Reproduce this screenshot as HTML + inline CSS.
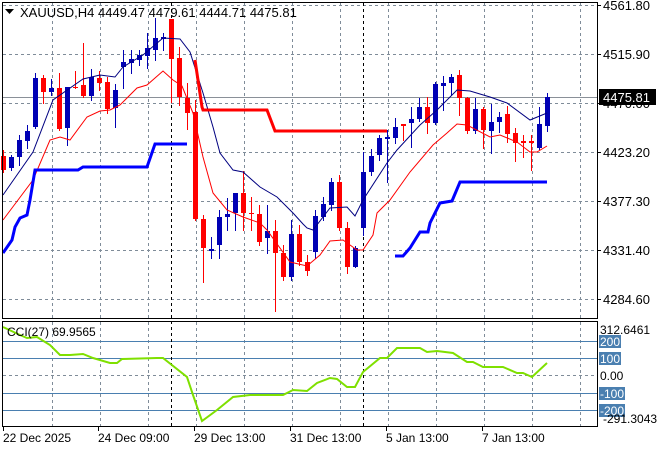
<!DOCTYPE html>
<html><head><meta charset="utf-8"><style>
html,body{margin:0;padding:0;background:#fff;}
svg{display:block;font-family:"Liberation Sans",sans-serif;}
</style></head><body>
<svg id="s" width="660" height="450" viewBox="0 0 660 450" xmlns="http://www.w3.org/2000/svg">
<rect width="660" height="450" fill="#fff"/>
<g id="grid" stroke="#7f8c99" stroke-width="1" stroke-dasharray="3,3" fill="none"></g>
<g id="cci" stroke="#4a7fb0" stroke-width="1"></g>
<path d="M171.5 3V426M363.5 3V426" stroke="#000" stroke-dasharray="3,3"/>
<line x1="2" y1="97.5" x2="597" y2="97.5" stroke="#8a9098"/>
<g id="c"></g>
<polyline fill="none" stroke="#000080" stroke-width="1" points="3,195 33,152 53,100 83,79 100,75 115,77 123,67 143,55 163,38 180,39 190,52 203,93 213,127 220,153 233,170 243,172 260,187 277,197 293,213 303,224 307,228 313,230 330,208 347,207 355,216 363,200 387,163 397,150 420,125 437,110 457,90 470,91 490,97 507,103 530,120 547,113"/>
<polyline fill="none" stroke="#ff0000" stroke-width="1" points="3,220 33,180 50,140 60,137 70,140 87,117 100,111 110,110 120,105 137,88 147,85 163,71 173,80 182,86 193,113 203,157 213,193 227,210 243,217 260,223 267,230 290,262 307,266 320,255 330,241 343,240 357,250 363,250 373,235 377,213 390,200 410,172 433,145 447,133 457,124 467,125 490,137 500,135 517,142 530,152 537,152 547,146"/>
<polyline fill="none" stroke="#ff0000" stroke-width="3" points="195,60 202,107 203,110 267,110 275,131 387,131"/>
<polyline fill="none" stroke="#0000ff" stroke-width="3" points="3,253 12,240 15,227 20,218 27,215 30,200 35,170 78,170 83,167 147,167 155,144 187,144"/>
<polyline fill="none" stroke="#0000ff" stroke-width="3" points="395,256 403,256 410,248 420,232 428,232 430,223 440,203 452,201 460,182 547,182"/>
<polyline fill="none" stroke="#7fe000" stroke-width="2" points="3,327 20,335 27,338 37,337 50,345 60,355 70,355 83,354 93,358 110,363 117,363 122,359 157,358 163,358 187,377 193,395 202,421 217,410 233,397 250,395 283,395 293,390 307,391 317,383 330,378 337,379 347,387 355,387 363,372 380,358 387,358 397,348 407,348 420,348 427,352 437,351 453,353 467,362 473,362 483,367 503,367 517,373 523,373 532,377 547,363"/>
<rect x="2.5" y="2.5" width="595" height="316" fill="none" stroke="#000"/>
<rect x="2.5" y="321.5" width="595" height="105" fill="none" stroke="#000"/>
<g id="ticks" stroke="#000"></g>
<path d="M5 9h9l-4.5 5z" fill="#000"/>
<text x="20" y="17" font-size="13" fill="#000">XAUUSD,H4  4449.47 4479.61 4444.71 4475.81</text>
<text x="7" y="336" font-size="12" fill="#000">CCI(27) 69.9565</text>
<g font-size="13" fill="#000" id="pl"></g>
<rect x="599" y="89" width="57" height="16" fill="#000"/>
<text x="603" y="102" font-size="13" fill="#fff">4475.81</text>
<g font-size="12">
<text x="600" y="334" fill="#000">312.6461</text>
<rect x="599" y="335" width="22" height="13" fill="#4a7fb0"/><text x="600" y="346" fill="#fff">200</text>
<rect x="599" y="352" width="22" height="13" fill="#4a7fb0"/><text x="600" y="363" fill="#fff">100</text>
<text x="600" y="380" fill="#000">0.00</text>
<rect x="599" y="387" width="26" height="13" fill="#4a7fb0"/><text x="600" y="398" fill="#fff">-100</text>
<rect x="599" y="404" width="26" height="13" fill="#4a7fb0"/><text x="600" y="415" fill="#fff">-200</text>
<text x="603" y="423" fill="#000">-291.3043</text>
</g>
<g font-size="12" fill="#000">
<text x="3" y="442">22 Dec 2025</text>
<text x="98" y="442">24 Dec 09:00</text>
<text x="194" y="442">29 Dec 13:00</text>
<text x="290" y="442">31 Dec 13:00</text>
<text x="386" y="442">5 Jan 13:00</text>
<text x="482" y="442">7 Jan 13:00</text>
</g>
</svg>
<script>
var NS="http://www.w3.org/2000/svg";
function el(p,t,a){var e=document.createElementNS(NS,t);for(var k in a)e.setAttribute(k,a[k]);document.getElementById(p).appendChild(e);return e;}
var vx=[52,100,148,196,244,292,340,388,436,484,532,580];
vx.forEach(function(x){el("grid","line",{x1:x+.5,y1:3,x2:x+.5,y2:318});el("grid","line",{x1:x+.5,y1:322,x2:x+.5,y2:426});});
[5,54,103,152,201,250,299].forEach(function(y){el("grid","line",{x1:3,y1:y+.5,x2:597,y2:y+.5});});
el("grid","line",{x1:3,y1:375.5,x2:597,y2:375.5});
[341,358,393,410].forEach(function(y){el("cci","line",{x1:3,y1:y+.5,x2:597,y2:y+.5});});
var pl=[[5,"4561.80"],[54,"4515.90"],[103,"4470.00"],[152,"4423.20"],[201,"4377.30"],[250,"4331.40"],[299,"4284.60"]];
pl.forEach(function(p){el("pl","line",{x1:597,y1:p[0]+.5,x2:601,y2:p[0]+.5,stroke:"#000"});var t=el("pl","text",{x:603,y:p[0]+5});t.textContent=p[1];});
[3,98,194,290,386,482].forEach(function(x){el("ticks","line",{x1:x+.5,y1:426,x2:x+.5,y2:431});});
var C=[["r",156,170,150,172],["b",157,168,155,170],["b",140,157,135,165],["b",131,141,125,148],["b",78,127,73,128],["r",78,92,75,103],["b",88,92,79,95],["r",88,129,73,130],["b",87,128,87,145],["r",87,88,71,88],["r",85,96,43,97],["b",77,96,69,100],["r",78,83,71,90],["r",82,109,77,113],["b",90,108,84,127],["b",62,67,50,88],["b",59,63,50,73],["b",55,60,50,65],["b",48,56,33,68],["b",38,50,18,60],["b",37,39,33,50],["r",19,59,19,102],["r",58,97,47,105],["r",98,113,83,129],["r",112,219,100,220],["r",219,248,215,282],["b",249,251,237,258],["b",217,245,210,258],["b",214,217,198,230],["b",193,213,193,230],["r",193,213,171,230],["r",213,214,197,230],["r",214,242,205,245],["b",231,238,205,253],["r",231,253,220,311],["r",253,277,245,280],["b",234,277,220,280],["r",234,262,225,265],["r",262,271,255,275],["b",216,252,210,258],["b",204,217,197,220],["b",182,205,178,210],["r",182,228,175,230],["r",228,267,222,273],["b",248,267,246,267],["b",172,228,152,235],["b",156,172,149,175],["b",138,155,135,160],["b",137,139,130,182],["b",127,138,118,143],["r",124,126,125,140],["b",119,123,107,147],["b",107,119,98,121],["r",107,123,97,133],["b",84,123,82,124],["b",83,86,76,110],["b",77,83,74,95],["r",75,98,70,115],["r",98,131,97,133],["b",109,131,98,133],["r",109,130,107,148],["b",122,131,104,153],["b",117,122,112,132],["r",114,134,106,142],["r",133,143,128,161],["r",141,143,135,157],["r",141,143,135,170],["b",124,148,107,149],["b",97,126,93,131]];
C.forEach(function(c,i){var x=3+8*i,col=c[0]=="r"?"#ff0000":"#0000b4";
el("c","line",{x1:x+.5,y1:c[3],x2:x+.5,y2:c[4]+1,stroke:col});
var h=Math.max(c[2]-c[1],1);
el("c","rect",{x:x-2,y:c[1],width:5,height:h,fill:col});});
</script>
</body></html>
